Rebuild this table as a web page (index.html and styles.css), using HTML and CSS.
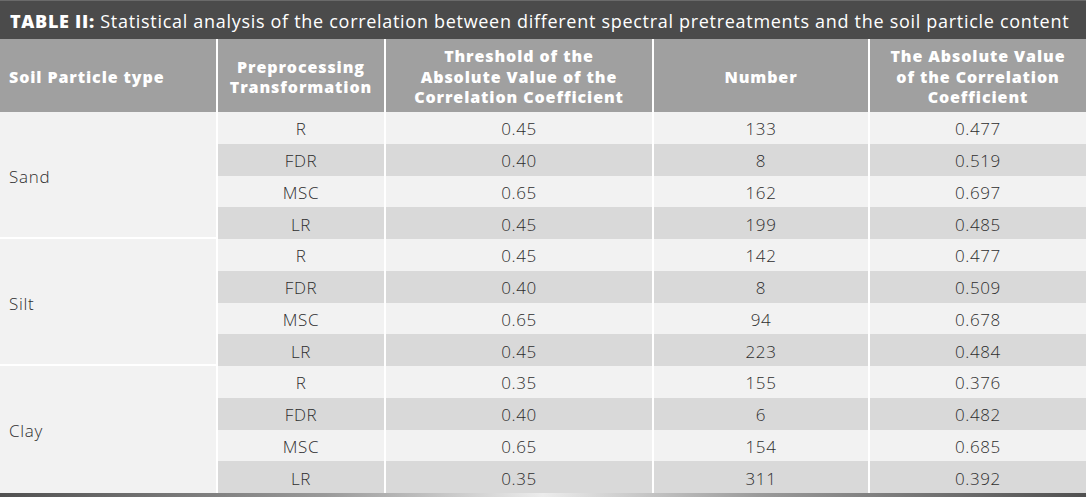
FILE: index.html
```html
<!DOCTYPE html>
<html lang="en">
<head>
<meta charset="utf-8">
<title>Table II</title>
<link rel="stylesheet" href="styles.css">
</head>
<body>
<div class="wrap">
  <div class="caption"><b>TABLE II:</b> Statistical analysis of the correlation between different spectral pretreatments and the soil particle content</div>
  <div class="grid">
    <div class="th left">Soil Particle type</div>
    <div class="th">Preprocessing<br>Transformation</div>
    <div class="th">Threshold of the<br>Absolute Value of the<br>Correlation Coefficient</div>
    <div class="th">Number</div>
    <div class="th">The Absolute Value<br>of the Correlation<br>Coefficient</div>

    <div class="grp">Sand</div>
    <div class="td">R</div><div class="td">0.45</div><div class="td">133</div><div class="td">0.477</div>
    <div class="td alt">FDR</div><div class="td alt">0.40</div><div class="td alt">8</div><div class="td alt">0.519</div>
    <div class="td">MSC</div><div class="td">0.65</div><div class="td">162</div><div class="td">0.697</div>
    <div class="td alt">LR</div><div class="td alt">0.45</div><div class="td alt">199</div><div class="td alt">0.485</div>

    <div class="grp">Silt</div>
    <div class="td">R</div><div class="td">0.45</div><div class="td">142</div><div class="td">0.477</div>
    <div class="td alt">FDR</div><div class="td alt">0.40</div><div class="td alt">8</div><div class="td alt">0.509</div>
    <div class="td">MSC</div><div class="td">0.65</div><div class="td">94</div><div class="td">0.678</div>
    <div class="td alt">LR</div><div class="td alt">0.45</div><div class="td alt">223</div><div class="td alt">0.484</div>

    <div class="grp last">Clay</div>
    <div class="td">R</div><div class="td">0.35</div><div class="td">155</div><div class="td">0.376</div>
    <div class="td alt">FDR</div><div class="td alt">0.40</div><div class="td alt">6</div><div class="td alt">0.482</div>
    <div class="td">MSC</div><div class="td">0.65</div><div class="td">154</div><div class="td">0.685</div>
    <div class="td alt">LR</div><div class="td alt">0.35</div><div class="td alt">311</div><div class="td alt">0.392</div>
  </div>
  <div class="rule"></div>
</div>
</body>
</html>
```
FILE: styles.css
```css
html, body {
  margin: 0;
  padding: 0;
  background: #ffffff;
}
body {
  font-family: "Open Sans", "Liberation Sans", sans-serif;
  color: #2e2e2e;
}
.wrap {
  width: 1086px;
}
.caption {
  height: 39px;
  box-sizing: border-box;
  background: #4b4b4b;
  color: #ffffff;
  font-size: 18px;
  letter-spacing: 0.7px;
  padding-left: 10px;
  padding-top: 2px;
  line-height: 37px;
  white-space: nowrap;
  border-top: 1px solid #6a6a6a;
}
.caption b {
  font-weight: 800;
}
.grid {
  display: grid;
  grid-template-columns: 216px 166px 266px 214px 216px;
  grid-template-rows: 73px repeat(12, 31.75px);
  column-gap: 2px;
}
.th {
  background: #a0a0a0;
  color: #ffffff;
  font-weight: 800;
  font-size: 16px;
  letter-spacing: 0.9px;
  line-height: 20.5px;
  display: flex;
  align-items: center;
  justify-content: center;
  text-align: center;
  padding-top: 3px;
}
.th.left {
  justify-content: flex-start;
  text-align: left;
  padding-left: 9px;
}
.grp {
  grid-row: span 4;
  grid-column: 1;
  background: #f2f2f2;
  display: flex;
  align-items: center;
  padding-left: 9px;
  padding-top: 2px;
  font-size: 17px;
  font-weight: 300;
  letter-spacing: 0.7px;
  box-shadow: inset 0 -2px 0 #ffffff;
}
.grp.last {
  box-shadow: none;
}
.td {
  background: #f2f2f2;
  display: flex;
  align-items: center;
  justify-content: center;
  padding-top: 2px;
  font-size: 17px;
  font-weight: 300;
  letter-spacing: 0.6px;
}
.td.alt {
  background: #d9d9d9;
}
.rule {
  height: 4px;
  background: linear-gradient(to right, #505050 0%, #9a9a9a 30%, #ececec 50%, #9a9a9a 70%, #505050 100%);
  box-shadow: 0 2px 2px rgba(0,0,0,0.12);
}
```
